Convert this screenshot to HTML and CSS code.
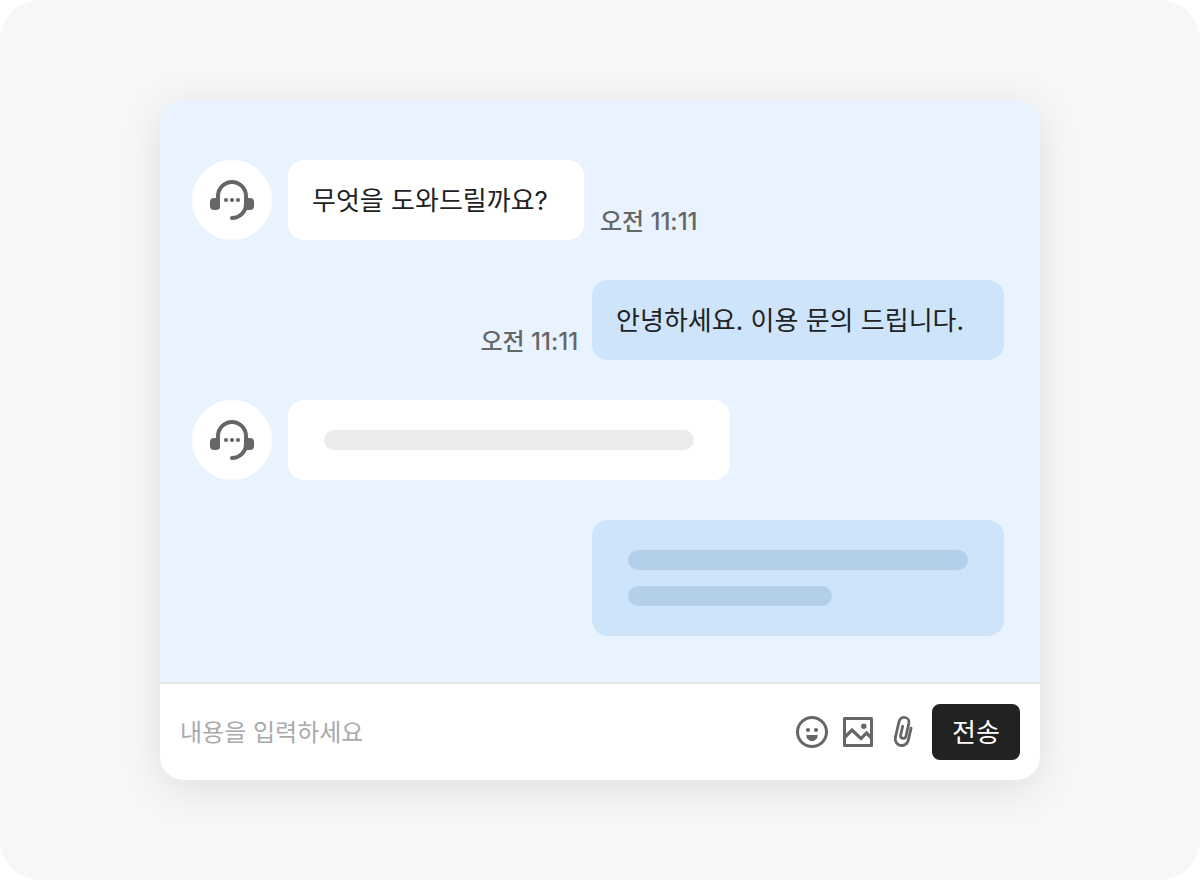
FILE: index.html
```html
<!DOCTYPE html>
<html lang="ko">
<head>
<meta charset="utf-8">
<meta name="viewport" content="width=device-width, initial-scale=1">
<title>채팅 상담</title>
<link rel="stylesheet" href="styles.css">
</head>
<body>
<svg class="symbols" aria-hidden="true">
  <symbol id="headset" viewBox="0 0 48 48">
    <path d="M10 31V20a14 14 0 0 1 28 0v8a14 14 0 0 1-14 14" fill="none" stroke="currentColor" stroke-width="4" stroke-linecap="round"/>
    <path d="M12 20v10q0 4-4 4H6q-4 0-4-4v-4q0-4 4-4h4zM36 20v14h6q4 0 4-4v-4q0-4-4-4h-3z" fill="currentColor"/>
    <circle cx="18" cy="24" r="2.1" fill="currentColor"/>
    <circle cx="24" cy="24" r="2.1" fill="currentColor"/>
    <circle cx="30" cy="24" r="2.1" fill="currentColor"/>
  </symbol>
</svg>
<main class="stage">
  <section class="chat" aria-label="채팅 상담">
    <div class="messages">
      <div class="message">
        <span class="avatar"><svg class="avatar-icon" aria-label="상담원"><use href="#headset"/></svg></span>
        <p class="bubble">무엇을 도와드릴까요?</p>
        <time class="time">오전 11:11</time>
      </div>
      <div class="message message-mine">
        <time class="time">오전 11:11</time>
        <p class="bubble">안녕하세요. 이용 문의 드립니다.</p>
      </div>
      <div class="message">
        <span class="avatar"><svg class="avatar-icon" aria-label="상담원"><use href="#headset"/></svg></span>
        <div class="bubble bubble-loading"><span class="line line-long"></span></div>
      </div>
      <div class="message message-mine">
        <div class="bubble bubble-loading"><span class="line line-medium"></span><span class="line line-short"></span></div>
      </div>
    </div>
    <form class="composer">
      <input class="composer-input" type="text" placeholder="내용을 입력하세요" aria-label="내용">
      <div class="tools">
        <button class="tool" type="button" aria-label="이모티콘">
          <svg class="tool-icon" viewBox="0 0 36 36">
            <circle cx="18" cy="18" r="14.5" fill="none" stroke="currentColor" stroke-width="3"/>
            <circle cx="14" cy="16" r="2.1" fill="currentColor"/>
            <circle cx="22" cy="16" r="2.1" fill="currentColor"/>
            <path d="M12.900 21h10.200q.7 0 .6.7A5.800 5.800 0 0 1 18 27.200a5.800 5.800 0 0 1-5.700-5.500q-.1-.7.6-.7z" fill="currentColor"/>
          </svg>
        </button>
        <button class="tool" type="button" aria-label="사진">
          <svg class="tool-icon" viewBox="0 0 36 36">
            <path d="M4.500 4.500h27v27h-27z" fill="none" stroke="currentColor" stroke-width="3" stroke-linejoin="round"/>
            <path d="M4.500 23.500l7.500-7.500 9 8.600 5.500-5.600 5 5" fill="none" stroke="currentColor" stroke-width="3.200"/>
            <circle cx="23.800" cy="12.200" r="2.700" fill="currentColor"/>
          </svg>
        </button>
        <button class="tool" type="button" aria-label="파일 첨부">
          <svg class="tool-icon" viewBox="0 0 36 36">
            <g transform="rotate(13 17 18)">
              <path d="M24 12.500V25a6.600 6.600 0 0 1-13.200 0V8.400a5 5 0 0 1 10 0V21.500a2.700 2.700 0 0 1-5.400 0V12.500" fill="none" stroke="currentColor" stroke-width="2.800" stroke-linecap="round"/>
            </g>
          </svg>
        </button>
      </div>
      <button class="send" type="submit">전송</button>
    </form>
  </section>
</main>
</body>
</html>
```
FILE: styles.css
```css
* {
  box-sizing: border-box;
}

body {
  margin: 0;
  background: #fff;
  color: #222;
  font-family: Inter, "Noto Sans CJK KR", sans-serif;
  font-size: 26px;
  line-height: 32px;
}

button,
input {
  font: inherit;
}

.symbols {
  position: absolute;
  width: 0;
  height: 0;
}

.stage {
  display: flex;
  flex-direction: column;
  min-height: 100vh;
  padding: 100px 160px;
  border-radius: 40px;
  background: #f7f7f7;
}

.chat {
  display: flex;
  flex: 1;
  flex-direction: column;
  overflow: hidden;
  border-radius: 24px;
  background: #fff;
  box-shadow: 0 8px 40px rgba(0, 0, 0, 0.1);
}

.messages {
  display: flex;
  flex: 1;
  flex-direction: column;
  gap: 40px;
  padding: 60px 36px 40px 32px;
  background: #e8f3ff;
}

.message {
  display: flex;
  align-items: flex-end;
  gap: 16px;
}

.message-mine {
  justify-content: flex-end;
  gap: 14px;
}

.avatar {
  display: grid;
  flex: none;
  place-items: center;
  width: 80px;
  height: 80px;
  border-radius: 50%;
  background: #fff;
  color: #666;
}

.avatar-icon {
  width: 48px;
  height: 48px;
}

.bubble {
  margin: 0;
  padding: 25px 36px 23px 24px;
  border-radius: 16px;
  background: #fff;
}

.message-mine .bubble {
  padding-right: 40px;
  background: #cde4fb;
}

.time {
  color: #666;
  font-size: 24px;
  font-weight: 500;
  line-height: 36px;
}

.bubble-loading,
.message-mine .bubble-loading {
  display: grid;
  gap: 16px;
  padding: 30px 36px;
}

.line {
  height: 20px;
  border-radius: 10px;
  background: #ebebeb;
}

.message-mine .line {
  background: #b3cfe9;
}

.line-long {
  width: 370px;
}

.line-medium {
  width: 340px;
}

.line-short {
  width: 204px;
}

.composer {
  display: flex;
  align-items: center;
  gap: 10px;
  padding: 20px;
  border-top: 2px solid #e5e5e5;
}

.composer-input {
  flex: 1;
  min-width: 0;
  padding: 2px 0 0;
  border: 0;
  outline: 0;
  background: none;
  color: #222;
  font-size: 24px;
}

.composer-input::placeholder {
  color: #aaa;
  opacity: 1;
}

.tools {
  display: flex;
  gap: 10px;
}

.tool {
  display: block;
  padding: 0;
  border: 0;
  background: none;
  color: #666;
}

.tool-icon {
  display: block;
  width: 36px;
  height: 36px;
}

.send {
  width: 88px;
  height: 56px;
  padding: 2px 0 0;
  border: 0;
  border-radius: 8px;
  background: #222;
  color: #fff;
}
```
